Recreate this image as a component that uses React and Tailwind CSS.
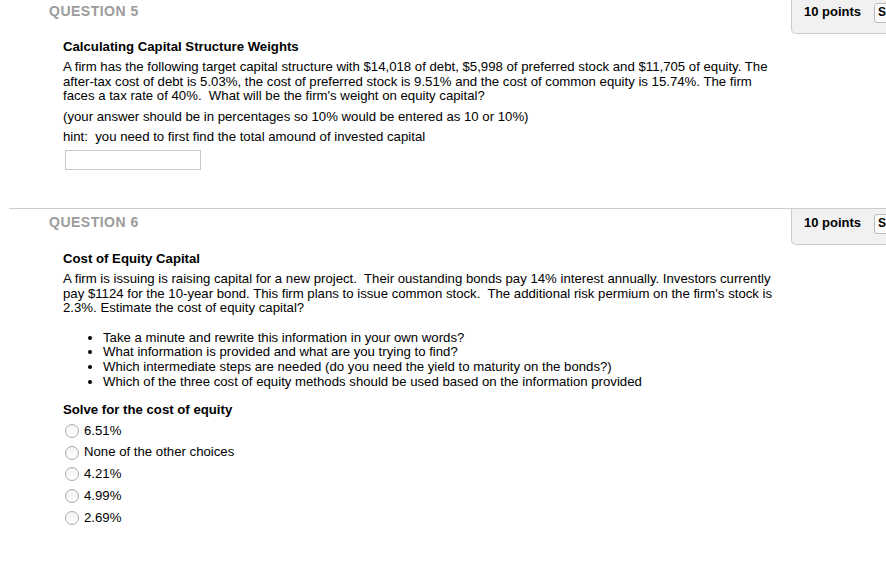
import React from "react";

function PointsBox() {
  return (
    <div className="w-[95px] shrink-0 h-[36px] pb-[6px] border-l border-b border-[#cccccc] rounded-bl-[5px] bg-[#f1f1f1] flex items-center pl-[12px] overflow-hidden">
      <span className="font-bold text-[13px] text-black whitespace-nowrap">10 points</span>
      <div className="ml-[13px] shrink-0 w-[44px] h-[20px] border border-[#bbbbbb] rounded-[3px] bg-[#fafafa] flex items-center pl-[3px] text-[12px] font-bold text-black">
        Save
      </div>
    </div>
  );
}

function Header({ n }) {
  return (
    <div className="pt-[5px] text-[14px] leading-[16px] font-bold tracking-[0.5px] text-[#9c9c9c]">
      QUESTION {n}
    </div>
  );
}

function Radio({ label }) {
  return (
    <div className="flex items-center h-[21.75px]">
      <span className="w-[14px] h-[14px] rounded-full border border-[#a9a9a9] bg-gradient-to-b from-[#f4f4f4] to-white ml-[2px] shrink-0" />
      <span className="ml-[5px]">{label}</span>
    </div>
  );
}

export default function App() {
  return (
    <div
      className="w-[886px] h-[566px] overflow-hidden bg-white text-black text-[13.2px] leading-[14.6px]"
      style={{ fontFamily: '"Liberation Sans", Arial, sans-serif' }}
    >
      {/* Question 5 */}
      <div className="-mt-[3px] ml-[9px] border-t border-[#cccccc] flex h-[211px]">
        <div className="flex-1 pl-[40px]">
          <Header n={5} />
          <div className="pl-[14px]">
            <div className="mt-[20px] font-bold leading-[15px]">Calculating Capital Structure Weights</div>
            <p className="mt-[6px] whitespace-nowrap">
              A firm has the following target capital structure with $14,018 of debt, $5,998 of preferred stock and $11,705 of equity. The
              <br />
              after-tax cost of debt is 5.03%, the cost of preferred stock is 9.51% and the cost of common equity is 15.74%. The firm
              <br />
              faces a tax rate of 40%.&nbsp; What will be the firm's weight on equity capital?
            </p>
            <p className="mt-[6px]">(your answer should be in percentages so 10% would be entered as 10 or 10%)</p>
            <p className="mt-[5.5px]">hint:&nbsp; you need to first find the total amound of invested capital</p>
            <div className="mt-[6px] ml-[2px] w-[136px] h-[20px] border border-[#c8c8c8] bg-white" />
          </div>
        </div>
        <PointsBox />
      </div>

      {/* Question 6 */}
      <div className="ml-[9px] border-t border-[#cccccc] flex">
        <div className="flex-1 pl-[40px]">
          <Header n={6} />
          <div className="pl-[14px]">
            <div className="mt-[20.5px] font-bold leading-[15px]">Cost of Equity Capital</div>
            <p className="mt-[6.5px] whitespace-nowrap">
              A firm is issuing is raising capital for a new project.&nbsp; Their oustanding bonds pay 14% interest annually. Investors currently
              <br />
              pay $1124 for the 10-year bond. This firm plans to issue common stock.&nbsp; The additional risk permium on the firm's stock is
              <br />
              2.3%. Estimate the cost of equity capital?
            </p>
            <ul className="mt-[15px] pl-[40px] list-disc leading-[14.67px]">
              <li>Take a minute and rewrite this information in your own words?</li>
              <li>What information is provided and what are you trying to find?</li>
              <li>Which intermediate steps are needed (do you need the yield to maturity on the bonds?)</li>
              <li>Which of the three cost of equity methods should be used based on the information provided</li>
            </ul>
            <div className="mt-[13px] font-bold leading-[15px]">Solve for the cost of equity</div>
            <div className="mt-[2.5px]">
              <Radio label="6.51%" />
              <Radio label="None of the other choices" />
              <Radio label="4.21%" />
              <Radio label="4.99%" />
              <Radio label="2.69%" />
            </div>
          </div>
        </div>
        <PointsBox />
      </div>
    </div>
  );
}
